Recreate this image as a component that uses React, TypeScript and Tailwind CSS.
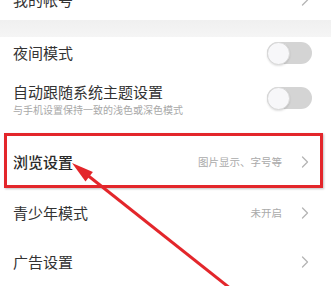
import React from "react";

const Chevron = () => (
  <svg width="8" height="12" viewBox="0 0 8 12" className="shrink-0">
    <path d="M1.5 1 L6.5 6 L1.5 11" fill="none" stroke="#b5b5b5" strokeWidth="1.3" strokeLinecap="round" strokeLinejoin="round" />
  </svg>
);

const Toggle = () => (
  <div className="relative h-[22px] w-[45px] shrink-0 rounded-full bg-[#d4d4d4]">
    <div className="absolute left-0 top-[-0.5px] h-[23px] w-[23px] rounded-full border border-[#d8d8d8] bg-[#f7f7f9] shadow-[0_1px_2px_rgba(0,0,0,0.12)]" />
  </div>
);

export default function App() {
  return (
    <div
      className="relative h-[286px] w-[331px] overflow-hidden bg-white text-[#333]"
      style={{ fontFamily: '"Noto Sans CJK SC", "Noto Sans", sans-serif' }}
    >
      <div className="-mt-[20px] flex flex-col">
        <div className="flex h-[40px] items-center justify-between pl-[13px] pr-[22px]">
          <span className="text-[15px]">我的帐号</span>
          <Chevron />
        </div>
        <div className="h-[17px] bg-gradient-to-b from-[#f0f0f0] to-[#f5f5f5]" />
        <div className="flex h-[32px] items-center justify-between pl-[13px] pr-[19px]">
          <span className="text-[15px] leading-[20px]">夜间模式</span>
          <Toggle />
        </div>
        <div className="flex h-[67px] items-start justify-between pl-[13px] pr-[19px] pt-[13px]">
          <div className="flex flex-col">
            <span className="text-[15px] leading-[20px]">自动跟随系统主题设置</span>
            <span className="text-[10px] leading-[15px] text-[#a8a8a8]">与手机设置保持一致的浅色或深色模式</span>
          </div>
          <div className="pt-[5px]">
            <Toggle />
          </div>
        </div>
        <div className="flex h-[52px] items-center justify-between pl-[13px] pr-[22px]">
          <span className="text-[15px] font-medium leading-[20px] text-[#2a2a2a]">浏览设置</span>
          <div className="flex items-center gap-[19px]">
            <span className="text-[10.5px] text-[#aaa]">图片显示、字号等</span>
            <Chevron />
          </div>
        </div>
        <div className="flex h-[50px] items-center justify-between pl-[13px] pr-[22px]">
          <span className="text-[15px] leading-[20px]">青少年模式</span>
          <div className="flex items-center gap-[19px]">
            <span className="text-[10.5px] text-[#aaa]">未开启</span>
            <Chevron />
          </div>
        </div>
        <div className="flex h-[48px] items-center justify-between pl-[13px] pr-[22px]">
          <span className="text-[15px] leading-[20px]">广告设置</span>
          <Chevron />
        </div>
      </div>

      <div className="pointer-events-none absolute left-[4px] top-[133px] h-[55px] w-[319px] border-[3px] border-[#e3262b] shadow-[1px_1px_2px_rgba(0,0,0,0.25)]" />

      <svg className="pointer-events-none absolute left-0 top-0" width="331" height="286" viewBox="0 0 331 286">
        <line x1="86" y1="174" x2="250" y2="304" stroke="#e3262b" strokeWidth="3" />
        <polygon points="72,163 85.5,181.4 92.9,172" fill="#e3262b" />
      </svg>
    </div>
  );
}
